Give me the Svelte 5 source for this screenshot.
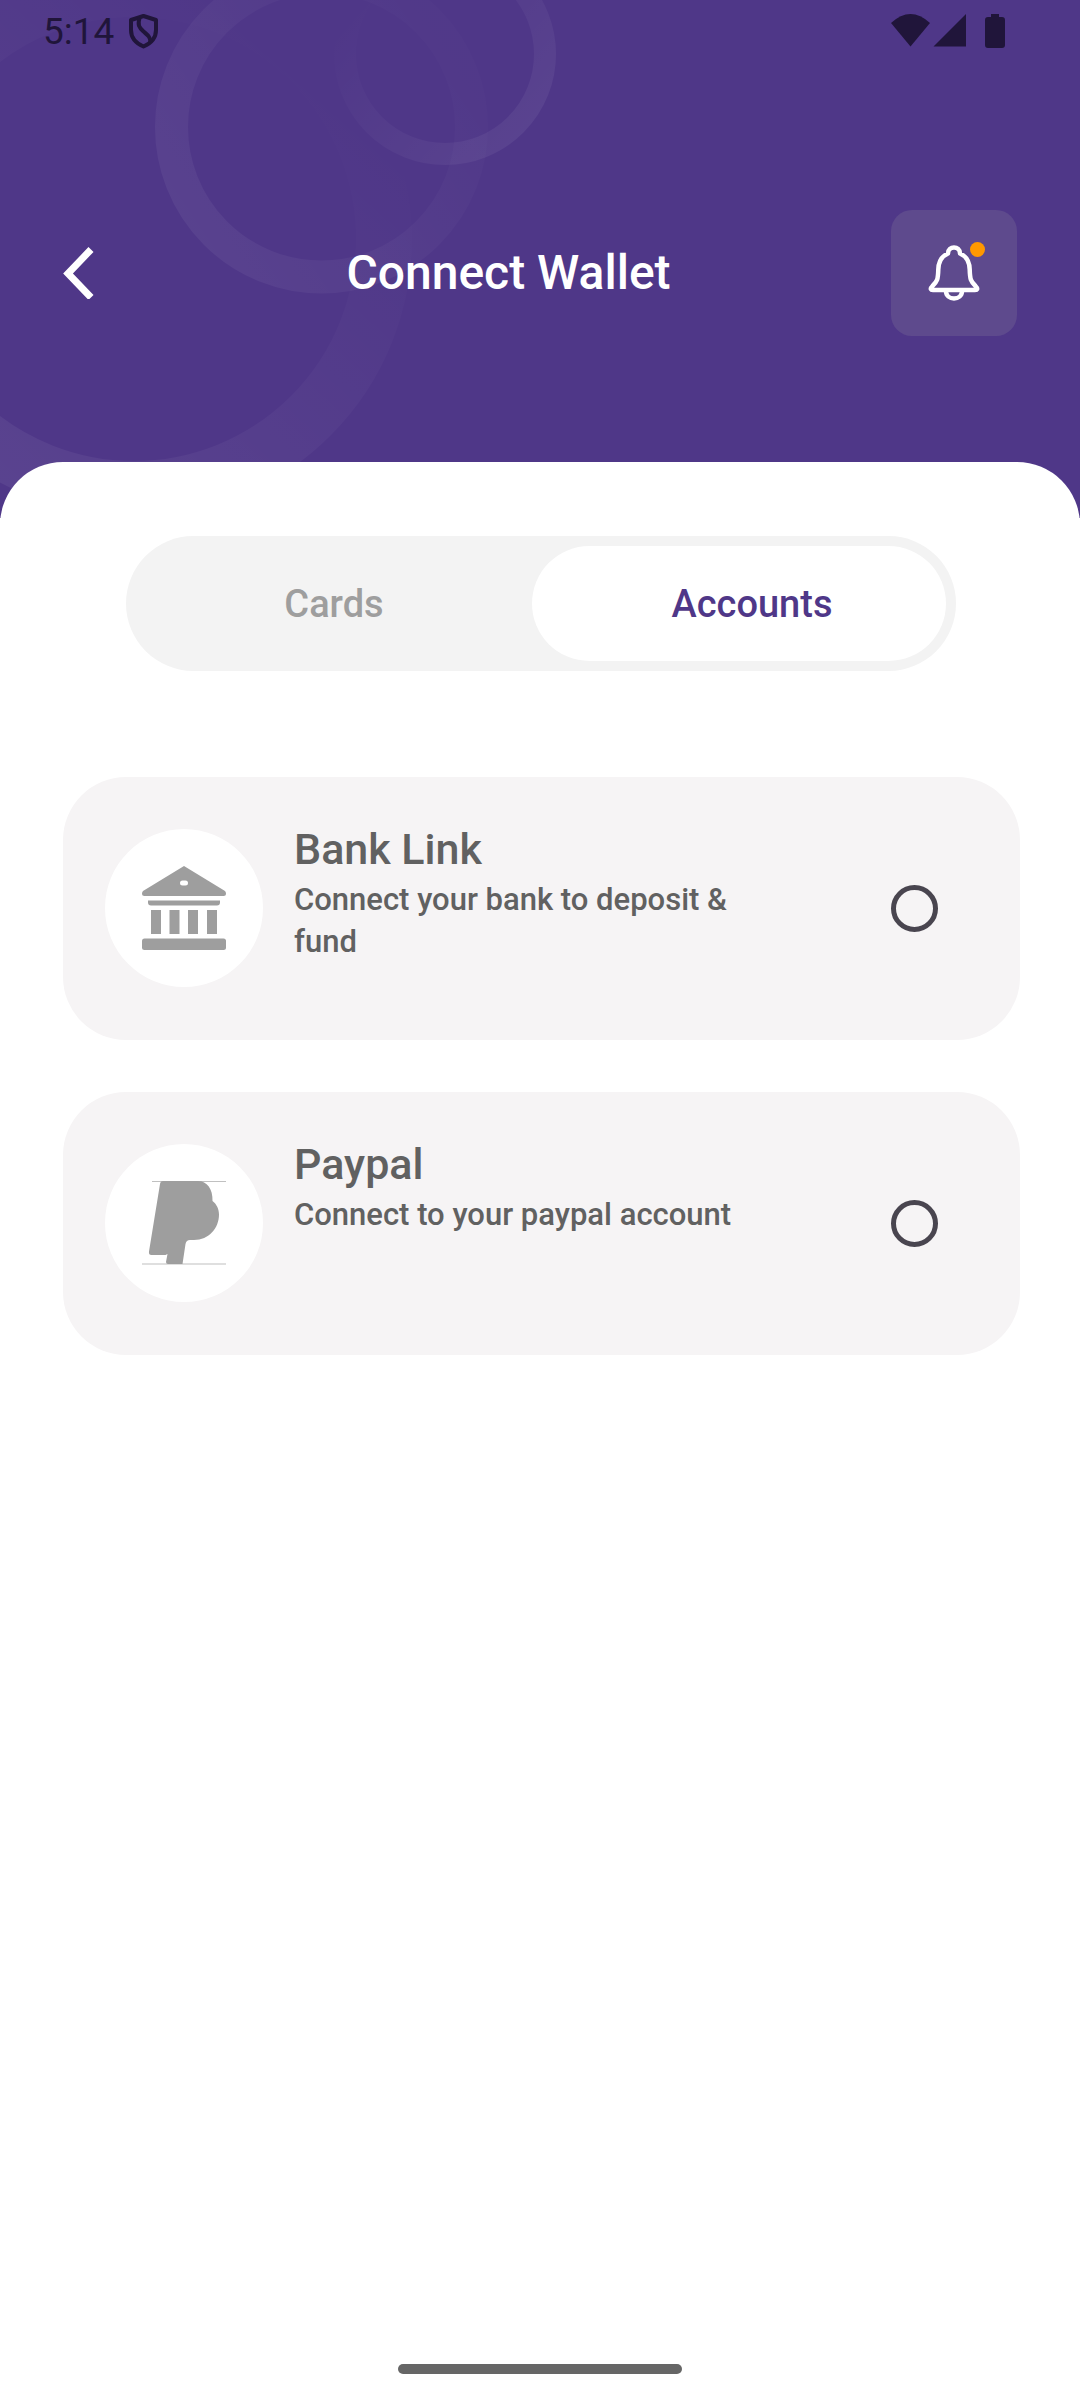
<script>
  const accounts = [
    { id: 'bank', title: 'Bank Link', text: 'Connect your bank to deposit & fund' },
    { id: 'paypal', title: 'Paypal', text: 'Connect to your paypal account' }
  ];
  let tab = $state('accounts');
  let selected = $state('');
</script>

<div class="screen">
  <header class="hero">
    <svg class="rings" width="600" height="518" viewBox="0 0 600 518" fill="none" aria-hidden="true">
      <defs>
        <linearGradient id="large" x1="0.1" y1="1" x2="0.85" y2="0.15">
          <stop stop-color="#fff" stop-opacity=".065" />
          <stop offset="1" stop-color="#fff" stop-opacity="0" />
        </linearGradient>
        <linearGradient id="medium" x1="0" y1="0.8" x2="0.9" y2="0.2">
          <stop stop-color="#fff" stop-opacity=".055" />
          <stop offset="1" stop-color="#fff" stop-opacity=".01" />
        </linearGradient>
        <linearGradient id="small" x1="0.9" y1="0.9" x2="0.1" y2="0.2">
          <stop stop-color="#fff" stop-opacity=".06" />
          <stop offset="1" stop-color="#fff" stop-opacity="0" />
        </linearGradient>
      </defs>
      <circle cx="134" cy="239" r="250" stroke="url(#large)" stroke-width="56" />
      <circle cx="321.5" cy="127" r="150" stroke="url(#medium)" stroke-width="33" />
      <circle cx="445" cy="54" r="100" stroke="url(#small)" stroke-width="22" />
    </svg>

    <div class="status">
      <span class="time">5:14</span>
      <svg width="30" height="36" viewBox="0 0 30 36" fill="none" stroke="#20153a" stroke-width="4" stroke-linejoin="round" aria-hidden="true">
        <path d="M15.500 3 28 7v10c0 8-5.500 13.500-12.500 16.500C8.500 30.500 3 25 3 17V7z" />
        <path d="M11.500 5c-2 7-.5 9.500 4 13.500s6.500 5 7 10.500" />
      </svg>
      <svg class="signals" width="114" height="36" viewBox="0 0 114 36" fill="#20153a" aria-hidden="true">
        <path d="M0 10Q19.500-8 39 10L19.500 33.500z" />
        <path d="M75 1v32.500H42.500z" />
        <path d="M100 1h8v3h3q3 0 3 3v25q0 3-3 3H97q-3 0-3-3V7q0-3 3-3h3z" />
      </svg>
    </div>

    <div class="bar">
      <button class="back" aria-label="Back">
        <svg width="32" height="52" viewBox="0 0 32 52" fill="none" stroke="#fff" stroke-width="7" aria-hidden="true">
          <path d="M28 2.500 5 26.500 28 50.500" />
        </svg>
      </button>
      <h1>Connect Wallet</h1>
      <button class="bell" aria-label="Notifications">
        <svg width="126" height="126" viewBox="0 0 126 126" fill="none" stroke="#fff" stroke-width="4.500" stroke-linejoin="round" aria-hidden="true">
          <path d="M57 43.500c0-8 12-8 12 0 7 3 9.500 9 9.700 16 .3 10 1 12 5.800 16.500 3 3 1.500 4-.5 4H42c-2 0-3.500-1-.5-4C46.300 71.500 47 69.500 47.300 59.500c.2-7 2.700-13 9.700-16z" />
          <path d="M55 81c0 10 16 10 16 0" />
          <circle cx="86.500" cy="39.500" r="7.500" fill="#ff9800" stroke="none" />
        </svg>
      </button>
    </div>
  </header>

  <main>
    <div class="tabs" role="tablist">
      <button role="tab" aria-selected={tab === 'cards'} class:active={tab === 'cards'} onclick={() => (tab = 'cards')}>Cards</button>
      <button role="tab" aria-selected={tab === 'accounts'} class:active={tab === 'accounts'} onclick={() => (tab = 'accounts')}>Accounts</button>
    </div>

    <div class="list">
      {#each accounts as a (a.id)}
        <label class="card">
          <span class="badge">
            {#if a.id === 'bank'}
              <svg width="84" height="84" viewBox="0 0 84 84" fill="#9e9e9e" aria-hidden="true">
                <path fill-rule="evenodd" d="M42 0 83 25q1 1 1 2.500Q84 30 81.500 30h-79Q0 30 0 27.500 0 26 1 25zM40.500 14.500a2.500 2.500 0 0 0 0 5h3a2.500 2.500 0 0 0 0-5z" />
                <path d="M6 34.500h72v2q0 3-3 3H9q-3 0-3-3zM9 44h10v24H9zM27.500 44h10v24h-10zM46 44h10v24H46zM65 44h10v24H65z" />
                <rect y="72.500" width="84" height="11.500" rx="2.500" />
              </svg>
            {:else}
              <svg width="84" height="84" viewBox="0 0 84 84" fill="#9e9e9e" aria-hidden="true">
                <path d="M21 0h35c9 0 15 8 14.500 20 4 3 6.500 8 6.500 13.500C77 47 67 59 52 59h-4c-2.500 0-4 1.500-4.500 4L40.500 83H26q-2 0-2-2l1.500-8-2 1H9.500Q6.500 74 7 70.500L18 3q.5-3 3-3z" />
                <path d="M0 82.500h84v1H0zM10 0h74v1H10z" opacity=".65" />
              </svg>
            {/if}
          </span>
          <span class="copy">
            <span class="name">{a.title}</span>
            <span class="text">{a.text}</span>
          </span>
          <input type="radio" name="account" value={a.id} bind:group={selected} />
        </label>
      {/each}
    </div>
  </main>

  <div class="handle"></div>
</div>

<style>
  :global(body) {
    margin: 0;
  }
  .screen {
    display: flex;
    flex-direction: column;
    min-height: 100vh;
    box-sizing: border-box;
    background: #fff;
    font-family: Roboto, sans-serif;
    font-weight: 500;
  }
  button {
    border: 0;
    padding: 0;
    background: none;
    font: inherit;
    cursor: pointer;
  }
  svg {
    display: block;
  }
  .hero {
    position: relative;
    overflow: hidden;
    background: #4f3788;
    padding-bottom: 182px;
  }
  .rings {
    position: absolute;
    top: 0;
    left: 0;
  }
  .status {
    position: relative;
    display: flex;
    align-items: center;
    gap: 14px;
    height: 62px;
    padding: 0 75px 0 43px;
    color: #20153a;
  }
  .time {
    font-size: 37px;
    font-weight: 400;
  }
  .signals {
    margin-left: auto;
  }
  .bar {
    position: relative;
    display: flex;
    align-items: center;
    justify-content: space-between;
    margin-top: 148px;
    padding: 0 63px;
  }
  .back {
    width: 126px;
    margin-right: -63px;
  }
  h1 {
    margin: 0;
    color: #fff;
    font-size: 48px;
    line-height: 56px;
    font-weight: 500;
  }
  .bell {
    border-radius: 21px;
    background: #5e4a8d;
  }
  main {
    position: relative;
    margin-top: -56px;
    padding: 74px 60px 0 63px;
    border-radius: 63px 63px 0 0;
    background: #fff;
  }
  .tabs {
    display: grid;
    grid-template-columns: 22fr 23fr;
    margin: 0 64px 0 63px;
    padding: 10px;
    border-radius: 68px;
    background: #f3f3f3;
  }
  .tabs button {
    height: 115px;
    border-radius: 58px;
    color: #9e9e9e;
    font-size: 38px;
  }
  .tabs button:last-child {
    padding-left: 26px;
  }
  .tabs .active {
    background: #fff;
    color: #4f3788;
  }
  .list {
    display: grid;
    gap: 52px;
    margin-top: 106px;
  }
  .card {
    display: flex;
    align-items: center;
    gap: 31px;
    padding: 52px 82px 53px 42px;
    border-radius: 63px;
    background: #f6f4f5;
    color: #616161;
  }
  .badge {
    display: grid;
    place-items: center;
    flex: none;
    width: 158px;
    height: 158px;
    border-radius: 50%;
    background: #fff;
  }
  .copy {
    display: grid;
    gap: 10px;
    flex: 1;
    align-self: flex-start;
    padding-right: 100px;
  }
  .name {
    font-size: 43px;
    line-height: 40px;
  }
  .text {
    font-size: 31px;
    line-height: 42px;
  }
  input {
    appearance: none;
    flex: none;
    width: 47px;
    height: 47px;
    margin: 0;
    border: 5px solid #49454f;
    border-radius: 50%;
  }
  input:checked {
    border-color: #4f3788;
    background: radial-gradient(#4f3788 50%, transparent 55%);
  }
  .handle {
    width: 284px;
    height: 10px;
    margin: auto auto 26px;
    border-radius: 5px;
    background: #666;
  }
</style>
